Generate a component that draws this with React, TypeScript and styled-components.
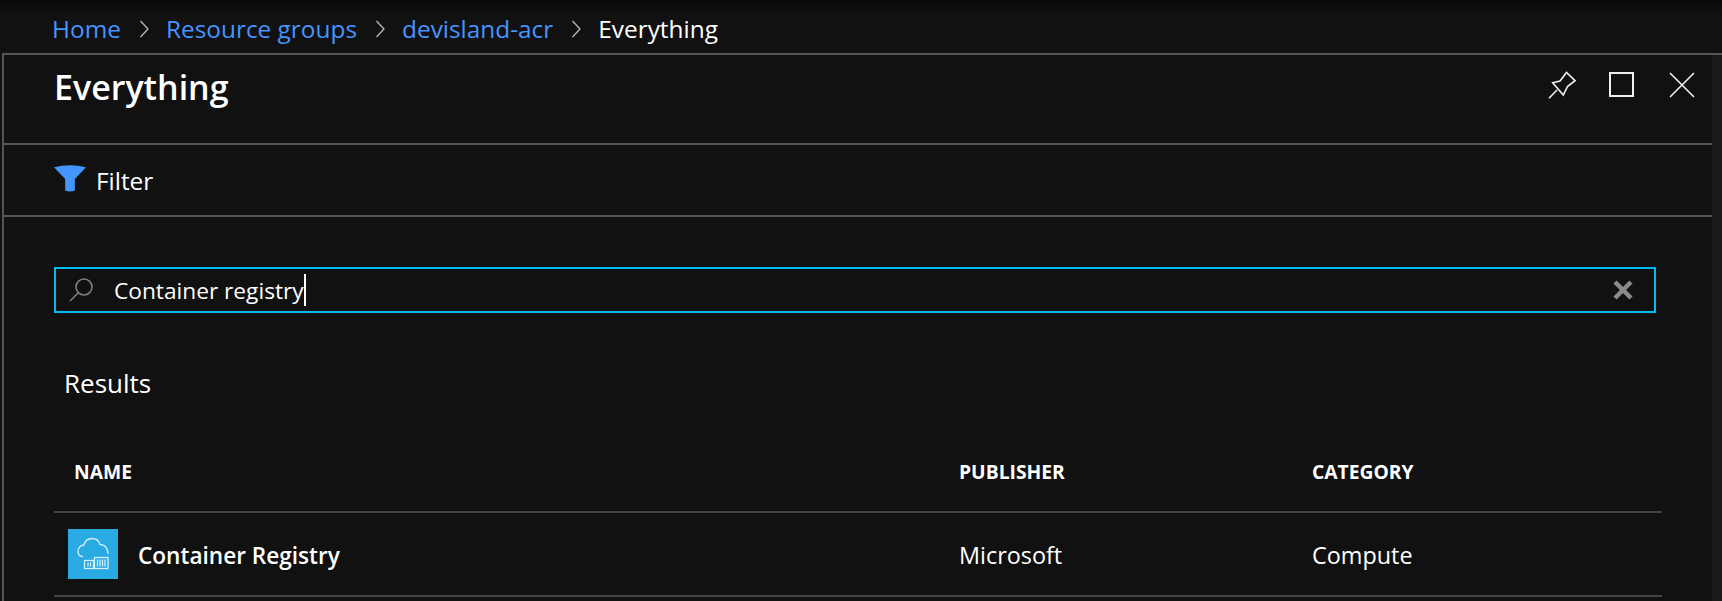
import React from "react";
import styled, { createGlobalStyle } from "styled-components";

const GlobalStyle = createGlobalStyle`
  html, body {
    margin: 0;
    padding: 0;
    background: #111111;
  }
  * {
    box-sizing: border-box;
  }
`;

const Page = styled.div`
  width: 1722px;
  height: 601px;
  overflow: hidden;
  display: flex;
  flex-direction: column;
  font-family: "Open Sans", "Noto Sans", "Liberation Sans", sans-serif;
  color: #ffffff;
  background: #111111;
`;

const Breadcrumbs = styled.nav`
  height: 53px;
  flex: none;
  display: flex;
  align-items: center;
  padding: 4px 0 0 52px;
  font-size: 24.4px;
  background: linear-gradient(#080808, #111111 12px);
`;

const Crumb = styled.a<{ $current?: boolean }>`
  color: ${(p) => (p.$current ? "#ffffff" : "#4495ff")};
`;

const Chevron = styled.svg`
  width: 10px;
  height: 18px;
  margin: 0 17px 0 18px;
  fill: none;
  stroke: #b8b8b8;
  stroke-width: 1.3;
`;

const Blade = styled.div`
  flex: 1;
  display: flex;
  margin-left: 2px;
  border-top: 2px solid #555555;
`;

const Main = styled.main`
  flex: 1;
  border-left: 2px solid #555555;
  min-width: 0;
`;

const Gutter = styled.div`
  width: 10px;
  flex: none;
  background: #1a1a1a;
`;

const Header = styled.header`
  height: 90px;
  display: flex;
  justify-content: space-between;
  align-items: flex-start;
  border-bottom: 2px solid #555555;
  padding: 10px 16px 0 50px;
`;

const Title = styled.h1`
  margin: 0;
  font-size: 34px;
  line-height: 44px;
  font-weight: 600;
`;

const HeaderActions = styled.div`
  display: flex;
  align-items: center;
  gap: 32px;
  padding-top: 6px;
`;

const ActionIcon = styled.svg`
  width: 28px;
  height: 28px;
  fill: none;
  stroke: #f0f0f0;
  stroke-width: 1.6;
  display: block;
`;

const Toolbar = styled.div`
  height: 72px;
  display: flex;
  align-items: center;
  gap: 10px;
  border-bottom: 2px solid #555555;
  padding: 0 0 0 50px;
  font-size: 24.4px;
`;

const Funnel = styled.svg`
  width: 32px;
  height: 28px;
  fill: #4495ff;
  margin-top: -4px;
`;

const Content = styled.div`
  padding: 50px 50px 0 50px;
`;

const SearchBox = styled.div`
  height: 46px;
  width: 1602px;
  display: flex;
  align-items: center;
  border: 2px solid #00bcf2;
  padding: 0 21px 0 12px;
`;

const SearchIcon = styled.svg`
  width: 26px;
  height: 26px;
  fill: none;
  stroke: #7f7f7f;
  stroke-width: 1.6;
  flex: none;
`;

const SearchText = styled.span`
  margin-left: 20px;
  font-size: 22.7px;
  flex: none;
`;

const Caret = styled.span`
  width: 2px;
  height: 32px;
  background: #ffffff;
  margin-right: auto;
`;

const ClearIcon = styled.svg`
  width: 20px;
  height: 20px;
  stroke: #8a8a8a;
  stroke-width: 4.5;
  flex: none;
`;

const ResultsHeading = styled.h2`
  margin: 50px 0 0 10px;
  height: 40px;
  font-size: 26px;
  line-height: 40px;
  font-weight: 400;
`;

const Table = styled.div`
  width: 1608px;
  margin-top: 28px;
`;

const columns = "905px 353px 1fr";

const HeadRow = styled.div`
  display: grid;
  grid-template-columns: ${columns};
  align-items: center;
  height: 82px;
  border-bottom: 2px solid #444444;
  font-size: 19.3px;
  font-weight: 700;
`;

const HeadCell = styled.div<{ $first?: boolean }>`
  padding-left: ${(p) => (p.$first ? "20px" : "0")};
`;

const Row = styled.div`
  display: grid;
  grid-template-columns: ${columns};
  align-items: center;
  height: 84px;
  border-bottom: 2px solid #444444;
  font-size: 23.4px;
  font-weight: 500;
`;

const NameCell = styled.div`
  display: flex;
  align-items: center;
  gap: 20px;
  padding-left: 14px;
  font-size: 22.6px;
  font-weight: 600;
`;

// text sits a touch below the icon's centre line
const CellText = styled.span`
  display: block;
  padding-top: 2px;
`;

const ResourceIcon = styled.svg`
  width: 50px;
  height: 50px;
  flex: none;
  display: block;
`;

export default function App() {
  const crumbs = ["Home", "Resource groups", "devisland-acr"];

  return (
    <>
      <GlobalStyle />
      <Page>
        <Breadcrumbs>
          {crumbs.map((name) => (
            <React.Fragment key={name}>
              <Crumb>{name}</Crumb>
              <Chevron viewBox="0 0 10 18">
                <path d="M1.5 1 L9 9 L1.5 17" />
              </Chevron>
            </React.Fragment>
          ))}
          <Crumb $current>Everything</Crumb>
        </Breadcrumbs>
        <Blade>
          <Main>
            <Header>
              <Title>Everything</Title>
              <HeaderActions>
                <ActionIcon viewBox="0 0 28 28">
                  <path d="M1 27.3 L9 19 M4.7 11.7 L12 10 L18.5 1.5 L27 9.7 L19.5 15.5 L15.3 24 Z" />
                </ActionIcon>
                <ActionIcon viewBox="0 0 28 28">
                  <rect x="2" y="2" width="23" height="23" strokeWidth="2" />
                </ActionIcon>
                <ActionIcon viewBox="0 0 28 28">
                  <path d="M2 2 L26 26 M26 2 L2 26" />
                </ActionIcon>
              </HeaderActions>
            </Header>
            <Toolbar>
              <Funnel viewBox="0 0 33 28">
                <path d="M0 3 Q16.5 -1.5 33 3 L21.5 15 L21.5 27 Q16.5 29 11.5 27 L11.5 15 Z" />
              </Funnel>
              <span>Filter</span>
            </Toolbar>
            <Content>
              <SearchBox>
                <SearchIcon viewBox="0 0 26 26">
                  <circle cx="16" cy="10" r="8" />
                  <path d="M10 16 L2 24" />
                </SearchIcon>
                <SearchText>Container registry</SearchText>
                <Caret />
                <ClearIcon viewBox="0 0 20 20">
                  <path d="M2 2 L18 18 M18 2 L2 18" />
                </ClearIcon>
              </SearchBox>
              <ResultsHeading>Results</ResultsHeading>
              <Table>
                <HeadRow>
                  <HeadCell $first>NAME</HeadCell>
                  <HeadCell>PUBLISHER</HeadCell>
                  <HeadCell>CATEGORY</HeadCell>
                </HeadRow>
                <Row>
                  <NameCell>
                    <ResourceIcon viewBox="0 0 50 50">
                      <rect width="50" height="50" fill="#2aaae3" />
                      <g fill="none" stroke="#d4eefa" strokeWidth="1.3">
                        <path d="M15 27.5 H14.5 C11.5 27.5 10 25 10 22 C10 18.5 13 16 16 16 C17 12 20 9.5 24 9.5 C28 9.5 31 12 32 15.5 C36.5 15.5 40 19 40 25" />
                        <rect x="16.5" y="31.5" width="9" height="8" />
                        <rect x="26.5" y="28.5" width="13.5" height="11" />
                        <path d="M20 33.5 V37.5 M22.5 33.5 V37.5 M29.5 30.5 V37.5 M32 30.5 V37.5 M34.5 30.5 V37.5 M37 30.5 V37.5" />
                      </g>
                    </ResourceIcon>
                    <CellText>Container Registry</CellText>
                  </NameCell>
                  <CellText>Microsoft</CellText>
                  <CellText>Compute</CellText>
                </Row>
              </Table>
            </Content>
          </Main>
          <Gutter />
        </Blade>
      </Page>
    </>
  );
}
